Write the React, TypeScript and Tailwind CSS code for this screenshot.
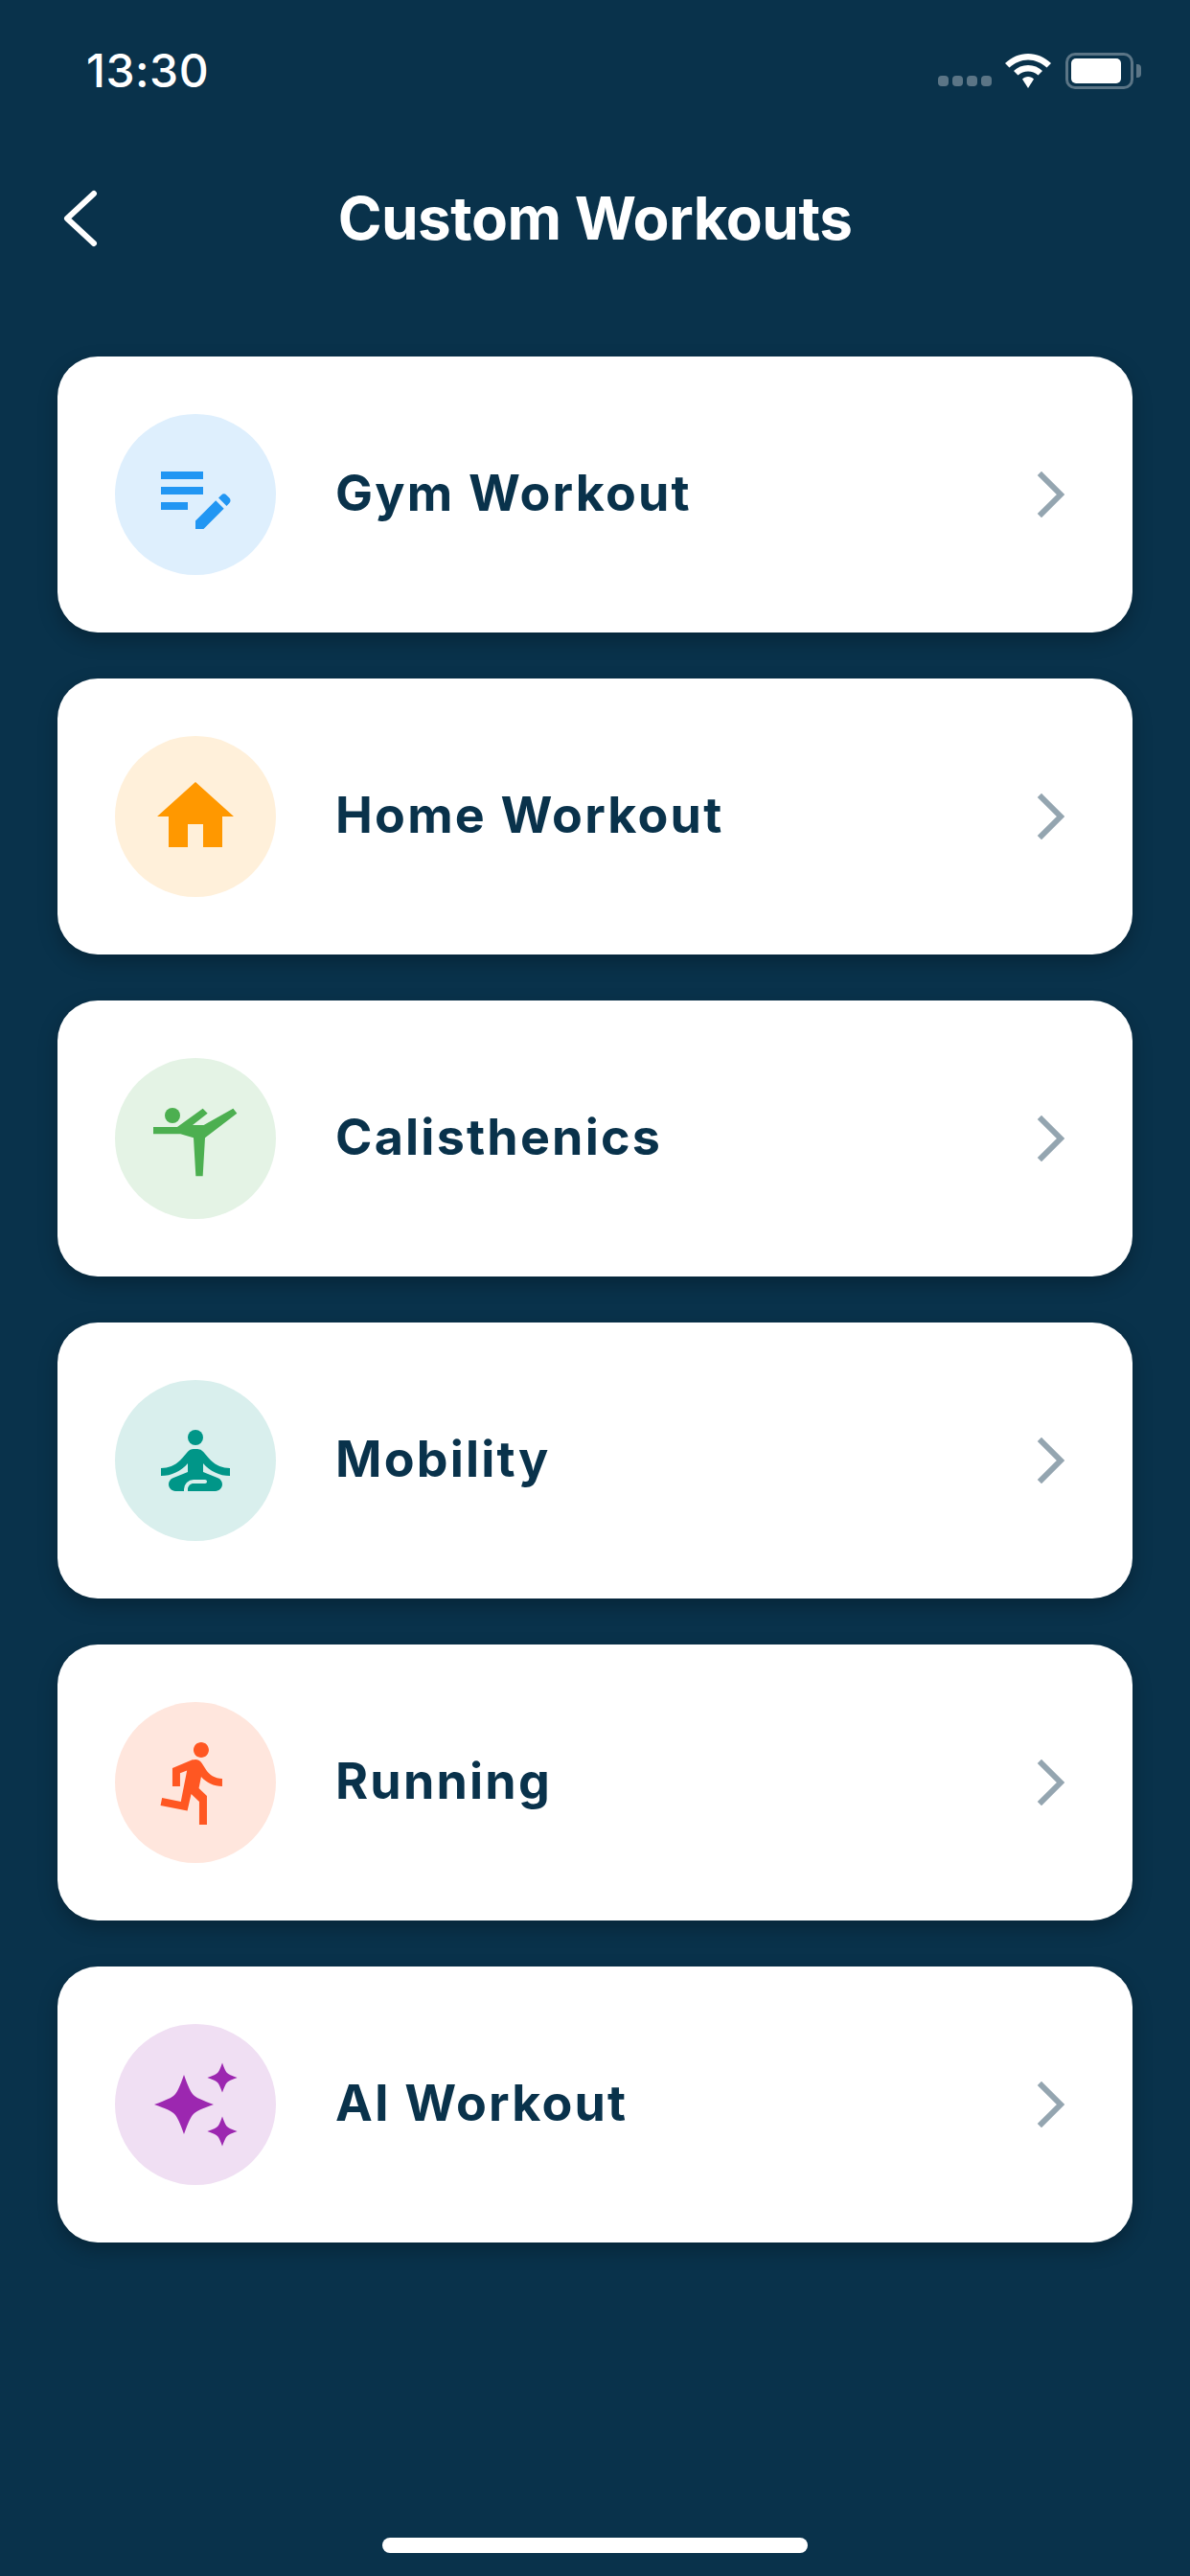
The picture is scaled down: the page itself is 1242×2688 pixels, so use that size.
import type { ReactNode } from "react";
import { MdEditNote, MdHome, MdSelfImprovement, MdDirectionsRun } from "react-icons/md";

function star(cx: number, cy: number, r: number) {
  const p = (x: number, y: number) => `${(cx + x * r).toFixed(2)} ${(cy + y * r).toFixed(2)}`;
  return (
    `M${p(0, -1)}Q${p(-0.2, -0.42)} ${p(-0.32, -0.32)}Q${p(-0.42, -0.2)} ${p(-1, 0)}` +
    `Q${p(-0.42, 0.2)} ${p(-0.32, 0.32)}Q${p(-0.2, 0.42)} ${p(0, 1)}` +
    `Q${p(0.2, 0.42)} ${p(0.32, 0.32)}Q${p(0.42, 0.2)} ${p(1, 0)}` +
    `Q${p(0.42, -0.2)} ${p(0.32, -0.32)}Q${p(0.2, -0.42)} ${p(0, -1)}Z`
  );
}

function Kick() {
  return (
    <svg width="96" height="96" viewBox="168 180 288 288" fill="#4CAF50">
      <circle cx="240" cy="252" r="24" />
      <path d="M180 288L255 288L335 230L350 245L303 282L338 282L430 230L442 245L342 322L335 442L313 442L306 322L265 310L180 310Z" />
    </svg>
  );
}

function Sparkles() {
  return (
    <svg width="96" height="96" viewBox="0 0 24 24" fill="#9C27B0">
      <path d={star(9, 12, 7.75)} />
      <path d={star(19, 5, 3.9)} />
      <path d={star(19, 19, 3.9)} />
    </svg>
  );
}

const items: { label: string; bg: string; icon: ReactNode }[] = [
  { label: "Gym Workout", bg: "bg-[#DEEFFD]", icon: <MdEditNote size={96} color="#2196F3" /> },
  { label: "Home Workout", bg: "bg-[#FFF0DA]", icon: <MdHome size={96} color="#FF9800" /> },
  { label: "Calisthenics", bg: "bg-[#E4F3E5]", icon: <Kick /> },
  { label: "Mobility", bg: "bg-[#D9EFED]", icon: <MdSelfImprovement size={96} color="#009688" /> },
  { label: "Running", bg: "bg-[#FFE6DD]", icon: <MdDirectionsRun size={96} color="#FF5722" /> },
  { label: "AI Workout", bg: "bg-[#F0DFF3]", icon: <Sparkles /> },
];

function StatusIcons() {
  return (
    <div className="flex items-center">
      <div className="flex gap-[4px] self-end mb-[3px]">
        <span className="block w-[11px] h-[11px] rounded-[4px] bg-[#5B7586]" />
        <span className="block w-[11px] h-[11px] rounded-[4px] bg-[#5B7586]" />
        <span className="block w-[11px] h-[11px] rounded-[4px] bg-[#5B7586]" />
        <span className="block w-[11px] h-[11px] rounded-[4px] bg-[#5B7586]" />
      </div>
      <svg className="ml-[14px]" width="48" height="36" viewBox="0 0 48 36" fill="white">
        <path d="M24 0C15 0 7 3.5 0 10L4.500 14.500C10 9.500 17 6.500 24 6.500C31 6.500 38 9.500 43.500 14.500L48 10C41 3.500 33 0 24 0Z" />
        <path d="M24 12C18 12 13 14 9 18L13.500 22.500C16.500 20 20 18.500 24 18.500C28 18.500 31.500 20 34.500 22.500L39 18C35 14 30 12 24 12Z" />
        <path d="M24 24C21.500 24 19.500 25 18 26.500L24 36L30 26.500C28.500 25 26.500 24 24 24Z" />
      </svg>
      <div className="ml-[15px] flex items-center">
        <div className="w-[71px] h-[38px] rounded-[10px] border-[3px] border-[#5B7586] p-[3px]">
          <div className="w-[52px] h-full rounded-[5px] bg-white" />
        </div>
        <div className="ml-[3px] w-[5px] h-[14px] rounded-r-[4px] bg-[#5B7586]" />
      </div>
    </div>
  );
}

export default function App() {
  return (
    <div
      className="w-[1242px] h-[2688px] bg-[#09324B] flex flex-col"
      style={{ fontFamily: "Inter, 'Liberation Sans', sans-serif" }}
    >
      <div className="flex items-center justify-between pl-[90px] pr-[51px] pt-[54px] h-[94px]">
        <span className="text-[48px] leading-[40px] font-medium text-white tracking-[0.5px]">13:30</span>
        <StatusIcons />
      </div>

      <div className="mt-[100px] h-[68px] px-[60px] grid grid-cols-[80px_1fr_80px] items-center">
        <svg width="60" height="60" viewBox="0 0 60 60" fill="none" stroke="white" strokeWidth="6" strokeLinecap="round" strokeLinejoin="round">
          <path d="M38 4L10 30L38 56" />
        </svg>
        <h1 className="text-center text-[62px] leading-[68px] font-bold text-white tracking-[-0.5px]">Custom Workouts</h1>
        <span />
      </div>

      <div className="mt-[110px] px-[60px] flex flex-col gap-[48px]">
        {items.map((item) => (
          <div
            key={item.label}
            className="h-[288px] rounded-[42px] bg-white flex items-center pl-[60px] pr-[70px] shadow-[0_8px_20px_rgba(0,0,0,0.25)]"
          >
            <div className={`w-[168px] h-[168px] rounded-full flex items-center justify-center shrink-0 ${item.bg}`}>
              {item.icon}
            </div>
            <span className="ml-[62px] mb-[3px] flex-1 text-[52px] font-bold text-[#09324B] tracking-[2.2px]">{item.label}</span>
            <svg width="30" height="48" viewBox="0 0 30 48" fill="none" stroke="#94A5B0" strokeWidth="6" strokeLinecap="square">
              <path d="M5 4L25 24L5 44" />
            </svg>
          </div>
        ))}
      </div>

      <div className="mt-auto mb-[24px] mx-auto w-[444px] h-[16px] rounded-full bg-white" />
    </div>
  );
}
